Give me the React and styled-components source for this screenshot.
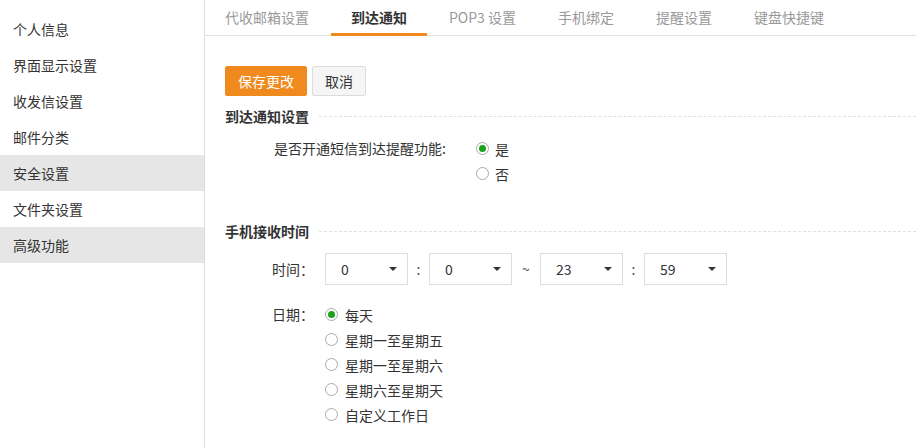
import React from 'react';
import styled, { createGlobalStyle } from 'styled-components';

const GlobalStyle = createGlobalStyle`
  body {
    margin: 0;
    background: #fff;
    color: #333;
    font-family: "Noto Sans CJK SC", "Noto Sans", "Liberation Sans", sans-serif;
    font-size: 14px;
  }
`;

const Page = styled.div`
  display: flex;
  min-height: 448px;
`;

const Sidebar = styled.nav`
  width: 204px;
  flex-shrink: 0;
  padding-top: 11px;
  border-right: 1px solid #ddd;
`;

const SideItem = styled.div`
  height: 36px;
  line-height: 36px;
  padding-left: 13px;
  background: ${(p) => (p.$shaded ? '#e6e6e6' : 'transparent')};
  cursor: pointer;
`;

const Main = styled.main`
  flex: 1;
  min-width: 0;
`;

const TabBar = styled.div`
  display: flex;
  height: 35px;
  border-bottom: 1px solid #e3e3e3;
`;

const Tab = styled.div`
  position: relative;
  padding: 0 20px;
  margin-right: 2px;
  line-height: 35px;
  color: ${(p) => (p.$active ? '#333' : '#999')};
  font-weight: ${(p) => (p.$active ? 'bold' : 'normal')};
  cursor: pointer;

  &::after {
    content: '';
    display: ${(p) => (p.$active ? 'block' : 'none')};
    position: absolute;
    left: 0;
    right: 0;
    bottom: -1px;
    height: 3px;
    background: #f08a1f;
  }
`;

const Content = styled.div`
  padding: 30px 0 0 20px;
`;

const Actions = styled.div`
  display: flex;
  gap: 5px;
`;

const Button = styled.button`
  height: 30px;
  padding: 0 12px;
  border-radius: 2px;
  font-family: inherit;
  font-size: 14px;
  cursor: pointer;
  border: 1px solid ${(p) => (p.$primary ? '#f08a1f' : '#dcdcdc')};
  background: ${(p) => (p.$primary ? '#f08a1f' : '#f5f5f5')};
  color: ${(p) => (p.$primary ? '#fff' : '#333')};
`;

const SectionTitle = styled.div`
  display: flex;
  align-items: center;
  margin-top: ${(p) => p.$top}px;
  line-height: 20px;
  font-weight: bold;

  &::after {
    content: '';
    flex: 1;
    margin-left: 10px;
    border-top: 1px dashed #e0e0e0;
  }
`;

const Row = styled.div`
  display: flex;
  align-items: flex-start;
  padding-left: ${(p) => p.$indent}px;
  margin-top: ${(p) => p.$top}px;
`;

const Label = styled.div`
  width: ${(p) => (p.$width ? `${p.$width}px` : 'auto')};
  margin-right: ${(p) => p.$gap || 0}px;
  line-height: 25px;
`;

const TimeLabel = styled.div`
  width: 53px;
  line-height: 32px;
`;

const RadioList = styled.div`
  display: flex;
  flex-direction: column;
`;

const RadioOption = styled.label`
  display: flex;
  align-items: center;
  gap: ${(p) => p.$gap || 7}px;
  height: 25px;
  cursor: pointer;
`;

const RadioDot = styled.span`
  position: relative;
  width: 11px;
  height: 11px;
  border: 1px solid #aaa;
  border-radius: 50%;
  background: #fff;
  flex-shrink: 0;

  &::after {
    content: '';
    display: ${(p) => (p.$checked ? 'block' : 'none')};
    position: absolute;
    left: 2px;
    top: 2px;
    width: 7px;
    height: 7px;
    border-radius: 50%;
    background: #1aa31a;
  }
`;

const Select = styled.div`
  position: relative;
  box-sizing: border-box;
  width: 83px;
  height: 32px;
  line-height: 30px;
  padding-left: 15px;
  border: 1px solid #ddd;
  background: #fff;
  cursor: pointer;

  &::after {
    content: '';
    position: absolute;
    right: 10px;
    top: 13px;
    border-left: 4px solid transparent;
    border-right: 4px solid transparent;
    border-top: 4px solid #333;
  }
`;

const Sep = styled.span`
  width: ${(p) => p.$width}px;
  text-align: center;
  line-height: 32px;
  color: #555;
`;

const sideItems = ['个人信息', '界面显示设置', '收发信设置', '邮件分类', '安全设置', '文件夹设置', '高级功能'];
const tabs = ['代收邮箱设置', '到达通知', 'POP3 设置', '手机绑定', '提醒设置', '键盘快捷键'];
const dateOptions = ['每天', '星期一至星期五', '星期一至星期六', '星期六至星期天', '自定义工作日'];

function Radio({ checked, children, gap }) {
  return (
    <RadioOption $gap={gap}>
      <RadioDot $checked={checked} />
      <span>{children}</span>
    </RadioOption>
  );
}

export default function App() {
  return (
    <>
      <GlobalStyle />
      <Page>
        <Sidebar>
          {sideItems.map((item, i) => (
            <SideItem key={item} $shaded={i === 4 || i === 6}>
              {item}
            </SideItem>
          ))}
        </Sidebar>
        <Main>
          <TabBar>
            {tabs.map((t, i) => (
              <Tab key={t} $active={i === 1}>
                {t}
              </Tab>
            ))}
          </TabBar>
          <Content>
            <Actions>
              <Button $primary>保存更改</Button>
              <Button>取消</Button>
            </Actions>

            <SectionTitle $top={10}>到达通知设置</SectionTitle>
            <Row $indent={49} $top={10}>
              <Label $gap={30}>是否开通短信到达提醒功能:</Label>
              <RadioList>
                <Radio checked gap={6}>是</Radio>
                <Radio gap={6}>否</Radio>
              </RadioList>
            </Row>

            <SectionTitle $top={35}>手机接收时间</SectionTitle>
            <Row $indent={47} $top={12}>
              <TimeLabel>时间：</TimeLabel>
              <Select>0</Select>
              <Sep $width={21}>:</Sep>
              <Select>0</Select>
              <Sep $width={28}>~</Sep>
              <Select>23</Select>
              <Sep $width={21}>:</Sep>
              <Select>59</Select>
            </Row>
            <Row $indent={47} $top={17}>
              <Label $width={53}>日期：</Label>
              <RadioList>
                {dateOptions.map((d, i) => (
                  <Radio key={d} checked={i === 0}>
                    {d}
                  </Radio>
                ))}
              </RadioList>
            </Row>
          </Content>
        </Main>
      </Page>
    </>
  );
}
